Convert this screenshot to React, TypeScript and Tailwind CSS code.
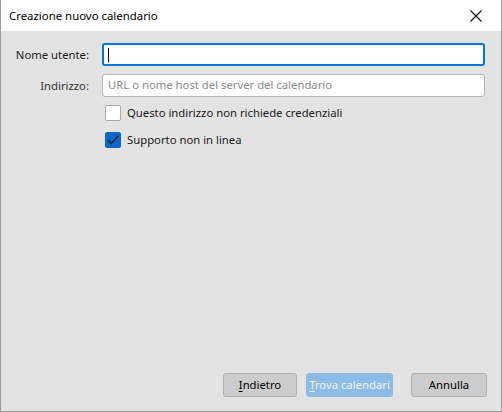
import React from "react";

export default function App() {
  const font = { fontFamily: '"Noto Sans", "Open Sans", sans-serif' };
  return (
    <div
      className="w-[502px] h-[412px] flex flex-col border-x border-b border-[#9c9c9c] bg-[#e3e3e3] text-[11.3px] text-[#1b1b1b] overflow-hidden"
      style={font}
    >
      <div className="h-[31px] shrink-0 bg-white flex items-center justify-between pl-[8px] pr-[19px]">
        <span className="text-[11.4px] text-black">Creazione nuovo calendario</span>
        <svg width="12" height="12" viewBox="0 0 12 12" className="shrink-0">
          <path d="M0.5 0.5 L11.5 11.5 M11.5 0.5 L0.5 11.5" stroke="#111" strokeWidth="1.1" fill="none" />
        </svg>
      </div>

      <div className="flex-1 flex flex-col pt-[12px] pr-[16px]">
        <div className="grid grid-cols-[88px_1fr] gap-x-[13px] gap-y-[8px] items-center">
          <label className="text-right leading-none">Nome utente:</label>
          <div className="h-[23px] bg-white border-2 border-[#0078d4] rounded-[3px] flex items-center pl-[4px]">
            <span className="w-px h-[14px] bg-black" />
          </div>
          <label className="text-right leading-none text-[#333]">Indirizzo:</label>
          <div className="h-[23px] bg-white border border-[#b5b5b5] rounded-[3px] flex items-center pl-[5px]">
            <span className="text-[#8b8b8b] whitespace-nowrap">URL o nome host del server del calendario</span>
          </div>
        </div>

        <div className="pl-[104px] mt-[8px] flex flex-col gap-[10px]">
          <div className="flex items-center gap-[6px]">
            <span className="w-[16px] h-[16px] bg-white border border-[#a8a8a8] rounded-[2px]" />
            <span>Questo indirizzo non richiede credenziali</span>
          </div>
          <div className="flex items-center gap-[6px]">
            <span className="w-[16px] h-[16px] bg-[#0a69c7] rounded-[2px] flex items-center justify-center">
              <svg width="12" height="10" viewBox="0 0 12 10">
                <path d="M1 5 L4.3 8.5 L11 1" stroke="#0b1e33" strokeWidth="1.3" fill="none" />
              </svg>
            </span>
            <span>Supporto non in linea</span>
          </div>
        </div>

        <div className="mt-auto flex justify-end pb-[14px] mr-[-2px]">
          <button className="w-[74px] h-[24px] px-0 bg-[#cccccc] border border-[#b2b2b2] rounded-[3px] text-[11.3px] text-black whitespace-nowrap">
            <span className="underline underline-offset-2">I</span>ndietro
          </button>
          <button className="ml-[9px] w-[87px] h-[24px] px-0 bg-[#8cbce6] border border-[#8cbce6] rounded-[3px] text-[11.3px] text-[#eef5fc] whitespace-nowrap">
            <span className="underline underline-offset-2">T</span>rova calendari
          </button>
          <button className="ml-[18px] w-[76px] h-[24px] px-0 bg-[#cccccc] border border-[#b2b2b2] rounded-[3px] text-[11.3px] text-black whitespace-nowrap">
            Annulla
          </button>
        </div>
      </div>
    </div>
  );
}
